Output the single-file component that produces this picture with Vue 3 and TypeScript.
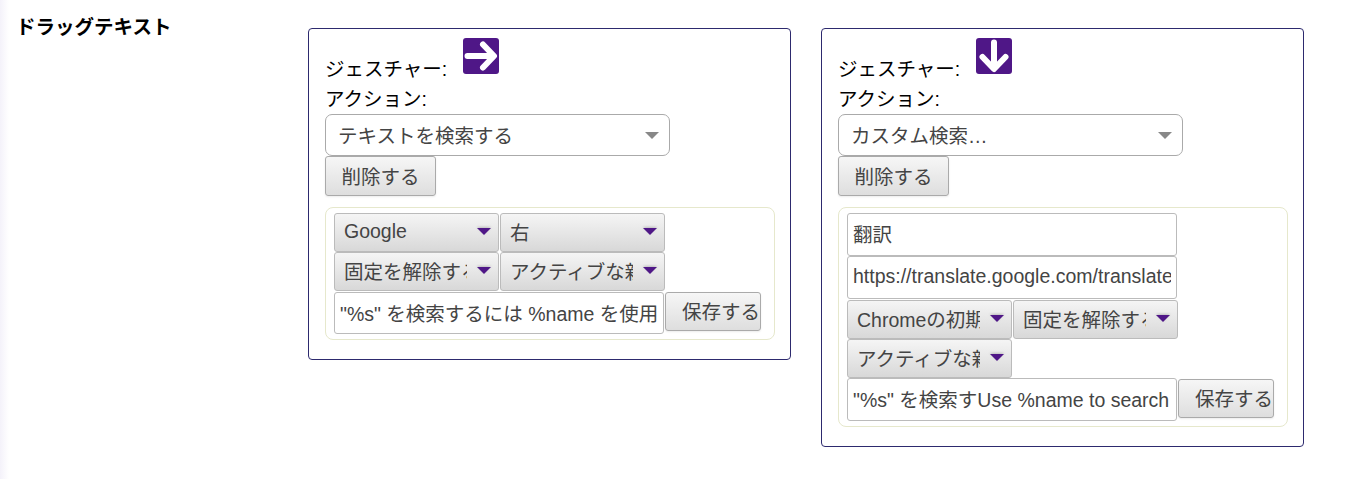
<script setup lang="ts">
interface Card {
  dir: 'right' | 'down'
  action: string
  inputs: string[]
  dropdowns: string[][]
  pattern: string
}
const cards: Card[] = [
  {
    dir: 'right',
    action: 'テキストを検索する',
    inputs: [],
    dropdowns: [['Google', '右'], ['固定を解除する', 'アクティブな新しいタブ']],
    pattern: '"%s" を検索するには %name を使用します',
  },
  {
    dir: 'down',
    action: 'カスタム検索…',
    inputs: ['翻訳', 'https://translate.google.com/translate'],
    dropdowns: [['Chromeの初期設定', '固定を解除する'], ['アクティブな新しいタブ']],
    pattern: '"%s" を検索すUse %name to search',
  },
]
</script>

<template>
  <div class="page">
    <h3 class="title">ドラッグテキスト</h3>
    <div class="cards">
      <section v-for="card in cards" :key="card.dir" class="card">
        <div class="gesture">
          <span>ジェスチャー:</span>
          <svg class="icon" viewBox="0 0 36 36" width="36" height="36">
            <rect width="36" height="36" rx="3" fill="#4f1787" />
            <path
              v-if="card.dir === 'right'"
              d="M4.500 18H30M20 6.500L31 18L20 29.500"
              fill="none"
              stroke="#fff"
              stroke-width="6"
              stroke-linecap="round"
              stroke-linejoin="round"
            />
            <path
              v-else
              d="M18 4.500V30M6.500 19L18 31L29.500 19"
              fill="none"
              stroke="#fff"
              stroke-width="6"
              stroke-linecap="round"
              stroke-linejoin="round"
            />
          </svg>
        </div>
        <div class="action-label">アクション:</div>
        <div class="select">
          <span>{{ card.action }}</span>
          <i class="arrow grey"></i>
        </div>
        <button class="delete" type="button">削除する</button>
        <div class="panel">
          <input v-for="v in card.inputs" :key="v" class="field" type="text" :value="v" readonly />
          <div v-for="(row, i) in card.dropdowns" :key="i" class="row">
            <div v-for="d in row" :key="d" class="dropdown">
              <span class="dd-text">{{ d }}</span>
              <i class="arrow purple"></i>
            </div>
          </div>
          <div class="row save-row" :class="{ tall: card.inputs.length > 0 }">
            <input class="field pattern" type="text" :value="card.pattern" readonly />
            <button class="save" type="button">保存する</button>
          </div>
        </div>
      </section>
    </div>
  </div>
</template>

<style>
html,
body {
  margin: 0;
  background: #fff;
}
</style>

<style scoped>
.page {
  display: flex;
  align-items: flex-start;
  height: 479px;
  box-sizing: border-box;
  overflow: hidden;
  padding: 28px 0 0 16px;
  background: linear-gradient(to right, #f4f2fa 0, #fff 9px);
  font-family: "Liberation Sans", "Noto Sans CJK JP", sans-serif;
  color: #000;
}
.title {
  width: 292px;
  margin: -13px 0 0;
  font-size: 19.5px;
  line-height: 24px;
  font-weight: 700;
}
.cards {
  display: flex;
  align-items: flex-start;
  gap: 30px;
}
.card {
  width: 483px;
  box-sizing: border-box;
  padding: 9px 16px 19px;
  border: 1px solid #2d2a6e;
  border-radius: 4px;
}
.gesture {
  display: flex;
  align-items: flex-end;
  height: 42px;
  font-size: 19.5px;
  line-height: 26px;
}
.gesture span {
  width: 138px;
  flex: none;
  margin-bottom: -2px;
}
.icon {
  display: block;
  margin-bottom: 6px;
}
.action-label {
  box-sizing: content-box;
  height: 28px;
  padding-top: 6px;
  font-size: 19.5px;
  line-height: 26px;
}
.select {
  display: flex;
  align-items: center;
  justify-content: space-between;
  width: 345px;
  height: 42px;
  box-sizing: border-box;
  padding: 0 10px 2px 12px;
  border: 1px solid #aaa;
  border-radius: 7px;
  color: #444;
  font-size: 19.5px;
  background: #fff;
}
.arrow {
  display: block;
  flex: none;
  width: 0;
  height: 0;
  border-left: 7px solid transparent;
  border-right: 7px solid transparent;
}
.arrow.grey {
  border-top: 7px solid #888;
  margin-top: 2px;
}
.arrow.purple {
  border-top: 7px solid #4f1787;
  filter: drop-shadow(0 -1px 1px #bbb);
  margin-left: auto;
  margin-top: -1px;
}
.delete,
.save {
  display: block;
  box-sizing: border-box;
  margin: 0;
  border: 1px solid #aaa;
  border-radius: 3px;
  background: linear-gradient(#f6f6f6, #dedede);
  color: #444;
  font: inherit;
  font-size: 19.5px;
  padding: 0 0 2px;
  box-shadow: 0 1px 2px rgba(0, 0, 0, 0.08);
}
.delete {
  width: 111px;
  height: 40px;
}
.panel {
  display: flex;
  flex-direction: column;
  align-items: flex-start;
  box-sizing: border-box;
  width: 450px;
  margin-top: 11px;
  padding: 5px 8px;
  border: 1px solid #e6e8cc;
  border-radius: 8px;
  background: #fff;
}
.row {
  display: flex;
  align-items: flex-start;
  gap: 1px;
}
.field + .row {
  margin-top: 1px;
}
.dropdown {
  display: flex;
  align-items: center;
  box-sizing: border-box;
  width: 165px;
  height: 39px;
  padding: 0 7px 2px 9px;
  border: 1px solid #bbb;
  border-radius: 3px;
  background: linear-gradient(#f5f5f5, #d8d8d8);
  color: #444;
  font-size: 19.5px;
}
.dd-text {
  flex: none;
  width: 123px;
  overflow: hidden;
  white-space: nowrap;
}
.field {
  display: block;
  box-sizing: border-box;
  width: 330px;
  height: 43px;
  margin: 0;
  padding: 0 5px 2px;
  border: 1px solid #bbb;
  border-radius: 3px;
  outline: none;
  background: #fff;
  color: #444;
  font: inherit;
  font-size: 19.5px;
}
.save-row {
  margin-top: 1px;
}
.pattern {
  height: 42px;
}
.save-row.tall {
  margin-top: 0;
}
.save-row.tall .pattern {
  height: 43px;
}
.save-row.tall .save {
  margin-top: 1px;
}
.save {
  width: 96px;
  height: 39px;
  padding-left: 16px;
  text-align: left;
  white-space: nowrap;
}
</style>
